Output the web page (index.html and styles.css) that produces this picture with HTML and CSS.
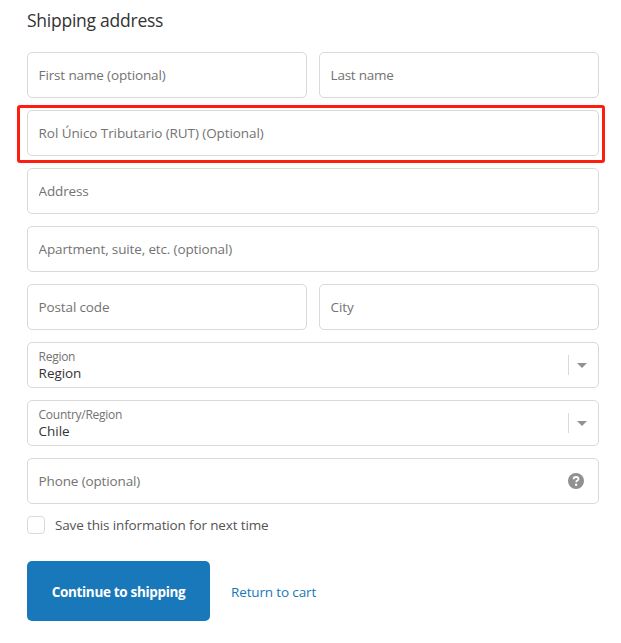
FILE: index.html
```html
<!DOCTYPE html>
<html lang="en">
<head>
  <meta charset="UTF-8" />
  <meta name="viewport" content="width=device-width, initial-scale=1.0"/>
  <title>Shipping address</title>
  <link rel="stylesheet" href="styles.css">
</head>
<body>
  <form class="checkout">
    <h2 class="section-title">Shipping address</h2>

    <div class="fields">
      <div class="row">
        <input class="field first-name" type="text" placeholder="First name (optional)">
        <input class="field last-name" type="text" placeholder="Last name">
      </div>
      <div class="row highlight">
        <input class="field rut" type="text" placeholder="Rol Único Tributario (RUT) (Optional)">
      </div>
      <div class="row">
        <input class="field address" type="text" placeholder="Address">
      </div>
      <div class="row">
        <input class="field apartment" type="text" placeholder="Apartment, suite, etc. (optional)">
      </div>
      <div class="row">
        <input class="field postal" type="text" placeholder="Postal code">
        <input class="field city" type="text" placeholder="City">
      </div>
      <div class="field select-field">
        <div class="select-text">
          <label class="region-label" for="region">Region</label>
          <select id="region"><option>Region</option></select>
        </div>
        <div class="caret"><svg width="10" height="5" viewBox="0 0 10 5"><path d="M0 0h10L5 5z" fill="#919191"/></svg></div>
      </div>
      <div class="field select-field">
        <div class="select-text">
          <label class="country-label" for="country">Country/Region</label>
          <select id="country"><option>Chile</option></select>
        </div>
        <div class="caret"><svg width="10" height="5" viewBox="0 0 10 5"><path d="M0 0h10L5 5z" fill="#919191"/></svg></div>
      </div>
      <div class="field phone-field">
        <input class="phone" type="text" placeholder="Phone (optional)">
        <svg class="help" width="16" height="16" viewBox="0 0 16 16">
          <circle cx="8" cy="8" r="8" fill="#919191"/>
          <path d="M5.6 6.3C5.6 4.7 6.6 4 8 4s2.5.8 2.5 2c0 1.6-2.3 1.6-2.3 3.2" fill="none" stroke="#fff" stroke-width="1.8"/>
          <circle cx="8.1" cy="11.8" r="1.2" fill="#fff"/>
        </svg>
      </div>
    </div>

    <label class="save">
      <input class="checkbox" type="checkbox">
      <span class="save-text">Save this information for next time</span>
    </label>

    <div class="actions">
      <button class="continue" type="button">Continue to shipping</button>
      <a class="return" href="#">Return to cart</a>
    </div>
  </form>
</body>
</html>
```
FILE: styles.css
```css
* {
  box-sizing: border-box;
}

body {
  margin: 0;
  background: #fff;
  color: #333;
  font-family: "Open Sans", "Noto Sans", sans-serif;
  font-size: 13.5px;
  letter-spacing: -0.14px;
  overflow: hidden;
}

.checkout {
  width: 572px;
  margin-left: 27px;
  padding-top: 8px;
}

.section-title {
  margin: 0 0 20px;
  font-size: 17.5px;
  font-weight: 400;
  line-height: 24px;
  letter-spacing: -0.25px;
  white-space: nowrap;
}

.fields {
  display: flex;
  flex-direction: column;
  gap: 12px;
}

.row {
  display: flex;
  gap: 12px;
}

.field {
  flex: 1;
  min-width: 0;
  height: 46px;
  padding: 0 10.6px;
  border: 1px solid #d9d9d9;
  border-radius: 5px;
  background: #fff;
}

.fields > .field {
  flex: none;
}

input,
select {
  font: inherit;
  color: #333;
  letter-spacing: inherit;
}

input::placeholder {
  color: #737373;
  opacity: 1;
}

.last-name {
  letter-spacing: -0.25px;
}

.rut {
  letter-spacing: -0.08px;
}

/* red frame sits outside the row */
.highlight {
  position: relative;
}

.highlight::after {
  content: "";
  position: absolute;
  inset: -5px -6px -7px -10px;
  border: 3px solid #ff1d10;
  border-radius: 3px;
  pointer-events: none;
}

.select-field {
  display: flex;
  align-items: center;
  padding-right: 0;
}

.select-text {
  flex: 1;
  display: flex;
  flex-direction: column;
  align-items: flex-start;
}

.select-text label {
  padding-top: 1px;
  color: #737373;
  font-size: 12px;
  line-height: 16px;
  letter-spacing: -0.28px;
}

.select-text select {
  appearance: none;
  height: 18px;
  margin: -1px 0 0;
  padding: 0;
  border: none;
  background: none;
  line-height: 18px;
  letter-spacing: -0.05px;
}

.caret {
  display: flex;
  align-items: center;
  width: 30px;
  height: 20px;
  padding-left: 8px;
  border-left: 1px solid #d9d9d9;
}

.phone-field {
  display: flex;
  align-items: center;
  padding-right: 14px;
}

.phone {
  flex: 1;
  padding: 0;
  border: none;
  outline: none;
}

.save {
  display: flex;
  align-items: center;
  gap: 10px;
  height: 18px;
  margin-top: 12px;
  color: #545454;
}

.checkbox {
  appearance: none;
  width: 18px;
  height: 18px;
  margin: 0;
  border: 1px solid #d9d9d9;
  border-radius: 4px;
}

.actions {
  display: flex;
  align-items: center;
  gap: 21px;
  margin-top: 27px;
}

.continue {
  width: 183px;
  height: 60px;
  padding: 2px 0 0;
  border: none;
  border-radius: 5px;
  background: #1978b9;
  color: #fff;
  font: inherit;
  font-weight: 700;
  letter-spacing: -0.33px;
  white-space: nowrap;
}

.return {
  padding-top: 2px;
  color: #1978b9;
  text-decoration: none;
}
```
